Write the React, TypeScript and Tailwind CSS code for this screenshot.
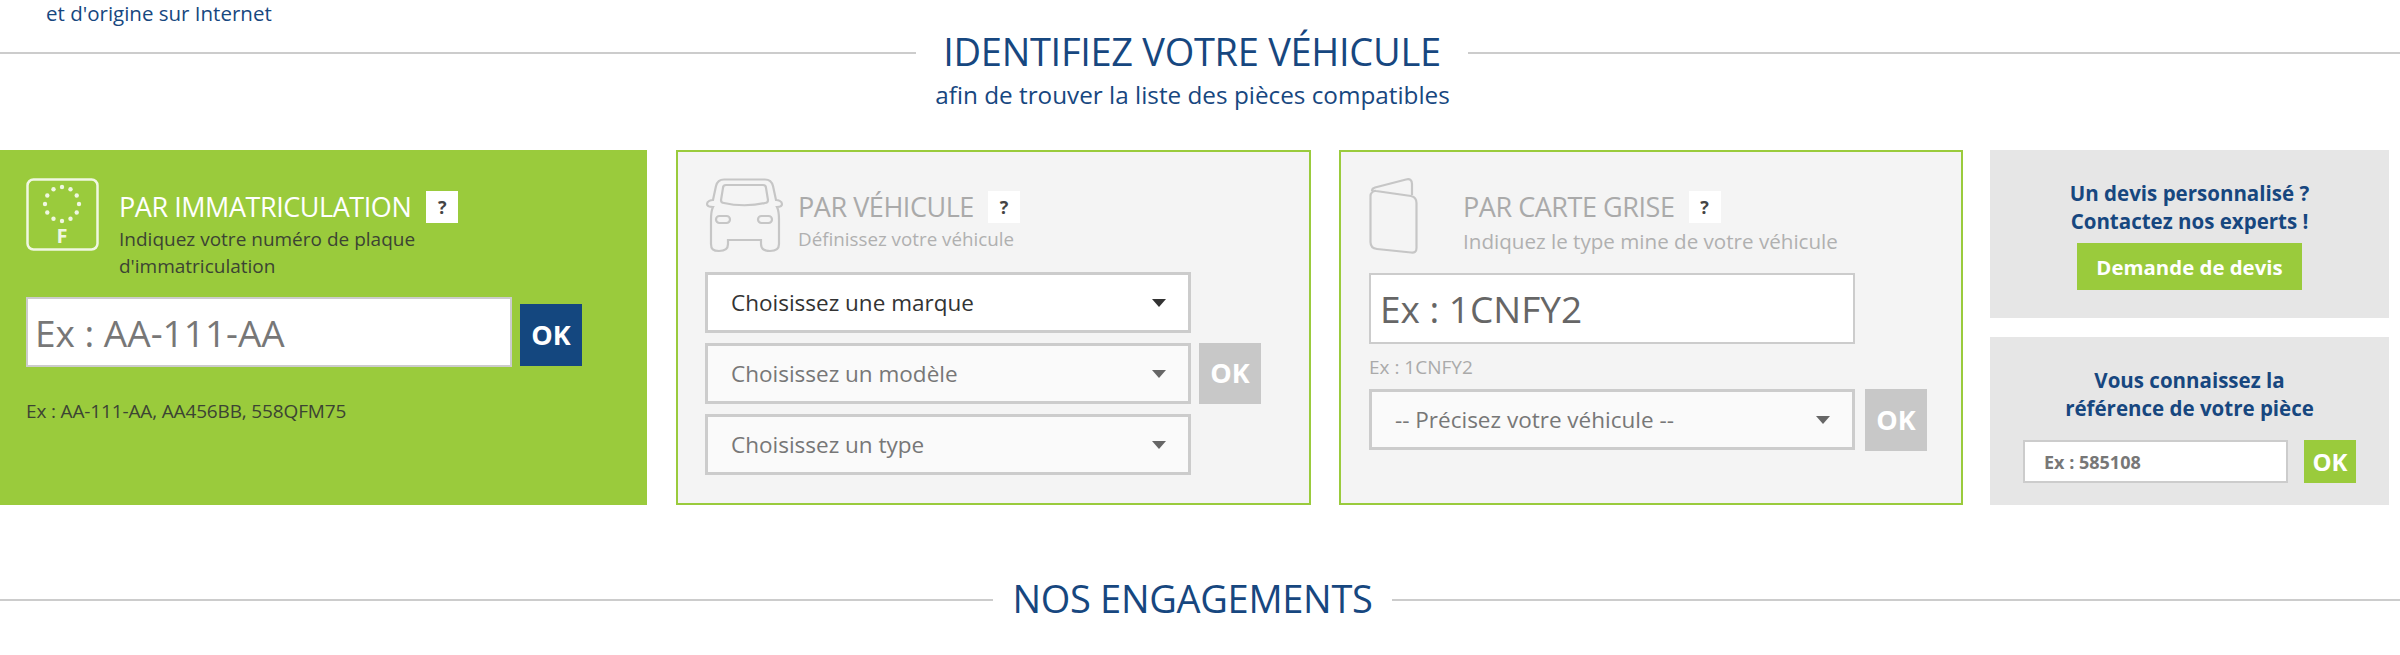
import type { ReactNode } from 'react';

const stars = Array.from({ length: 12 }, (_, i) => {
  const a = (i * Math.PI) / 6;
  return { x: 36 + 17 * Math.sin(a), y: 26 - 17 * Math.cos(a) };
});

const PlateIcon = () => (
  <svg width="73" height="73" viewBox="0 0 73 73" className="shrink-0">
    <rect x="1.5" y="1.5" width="70" height="70" rx="6" fill="none" stroke="#ffffff" strokeOpacity="0.85" strokeWidth="2.5" />
    {stars.map((s, i) => (
      <circle key={i} cx={s.x} cy={s.y} r="2.2" fill="#ffffff" fillOpacity="0.85" />
    ))}
    <text x="36" y="65" textAnchor="middle" fontSize="20" fontWeight="700" fill="#ffffff" fillOpacity="0.85" fontFamily="Open Sans, sans-serif">
      F
    </text>
  </svg>
);

const CarIcon = () => (
  <svg width="79" height="75" viewBox="0 0 79 75" fill="none" stroke="#c6c6c6" strokeWidth="2.2" className="shrink-0">
    <path d="M19 1.5H60C65 1.5 67 4 68 8L71 22C73 22 77 23 77 26C77 29 74 29 72 29C74 33 74 38 74 42V66C74 71 71 73 65 73C59 73 56 71 56 66V62H23V66C23 71 20 73 14 73C8 73 6 71 6 66V42C6 38 6 33 8 29C6 29 2 29 2 26C2 23 6 22 8 22L11 8C12 4 14 1.5 19 1.5Z" />
    <path d="M21 7H58C60 7 61 8 61 10L63 22C63 24 62 25 60 25C48 28 31 28 19 25C17 25 16 24 16 22L18 10C18 8 19 7 21 7Z" />
    <rect x="11" y="38" width="14" height="7" rx="3.5" />
    <rect x="53" y="38" width="14" height="7" rx="3.5" />
  </svg>
);

const CardIcon = () => (
  <svg width="49" height="76" viewBox="0 0 49 76" fill="none" stroke="#c6c6c6" strokeWidth="2.2" className="shrink-0">
    <path d="M7 13L42 18C46 19 47.5 21 47.5 25V70C47.5 74 45.5 75 42 74.5L8 71C3 70.5 1.5 68 1.5 64V18C1.5 15 4 12.5 7 13Z" />
    <path d="M3 13C3 11 4 10 6 9.5L37 1.5C41 0.5 43 2 43 6V17" />
  </svg>
);

const SectionTitle = ({ line, text, children }: { line: string; text: string; children: ReactNode }) => (
  <div className="flex items-center">
    <div className={`h-[2px] bg-[#cccccc] ${line}`} />
    <div className={`pb-[4px] text-center text-[38px] leading-[36px] tracking-[-0.3px] text-[#17477f] ${text}`}>{children}</div>
    <div className="h-[2px] flex-1 bg-[#cccccc]" />
  </div>
);

const Help = () => (
  <span className="flex h-8 w-8 shrink-0 items-center justify-center bg-white text-[18px] font-bold text-[#444444]">?</span>
);

const Ok = ({ className }: { className: string }) => (
  <button className={`flex shrink-0 items-center justify-center font-bold text-white ${className}`}>OK</button>
);

const Select = ({ label, active }: { label: string; active?: boolean }) => (
  <div
    className={`flex h-[61px] w-[486px] items-center justify-between border-[3px] border-[#cccccc] pl-[23px] pr-[22px] text-[22.5px] ${
      active ? 'bg-white text-[#333333]' : 'bg-[#fafafa] text-[#777777]'
    }`}
  >
    <span>{label}</span>
    <span className={`h-0 w-0 border-x-[7px] border-t-[8px] border-x-transparent ${active ? 'border-t-[#333333]' : 'border-t-[#666666]'}`} />
  </div>
);

const Head = ({ title, sub, subClass }: { title: string; sub: string; subClass: string }) => (
  <div className="pt-[13px]">
    <div className="flex h-8 items-center gap-[14px]">
      <span className="text-[27px] tracking-[-0.45px] text-[#aaaaaa]">{title}</span>
      <Help />
    </div>
    <p className={`leading-[27px] text-[#b0b0b0] ${subClass}`}>{sub}</p>
  </div>
);

export default function App() {
  return (
    <div className="h-[655px] overflow-hidden bg-white font-['Open_Sans',sans-serif]">
      <p className="h-[27px] pl-[46px] text-[20.5px] leading-[26px] text-[#17477f]">et d'origine sur Internet</p>

      <div className="mt-[6px]">
        <SectionTitle line="w-[916px]" text="w-[552px]">
          IDENTIFIEZ VOTRE VÉHICULE
        </SectionTitle>
      </div>
      <p className="mt-[4px] h-[36px] pr-[15px] text-center text-[24.3px] leading-[36px] text-[#17477f]">afin de trouver la liste des pièces compatibles</p>

      <div className="mt-[37px] flex h-[355px] pr-[11px]">
        <section className="mr-[29px] w-[647px] bg-[#9acb3c] pl-[26px] pt-[28px]">
          <div className="flex gap-[20px]">
            <PlateIcon />
            <div className="pt-[13px]">
              <div className="flex h-8 items-center gap-[15px]">
                <span className="text-[27px] tracking-[-0.45px] text-white">PAR IMMATRICULATION</span>
                <Help />
              </div>
              <p className="mt-[3px] w-[320px] text-[19px] leading-[27px] text-[#3c4433]">Indiquez votre numéro de plaque d'immatriculation</p>
            </div>
          </div>
          <div className="mt-[17px] flex gap-[8px]">
            <input
              placeholder="Ex : AA-111-AA"
              className="h-[70px] w-[486px] border-2 border-[#cccccc] bg-white px-[7px] text-[37px] placeholder:text-[#777777]"
            />
            <Ok className="mt-[7px] h-[62px] w-[62px] bg-[#14477f] text-[27px]" />
          </div>
          <p className="mt-[32px] text-[19px] leading-[24px] tracking-[-0.15px] text-[#3c4433]">Ex : AA-111-AA, AA456BB, 558QFM75</p>
        </section>

        <section className="mr-[28px] w-[635px] border-2 border-[#9acb3c] bg-[#f4f4f4] pl-[27px] pt-[26px]">
          <div className="flex gap-[14px]">
            <CarIcon />
            <Head title="PAR VÉHICULE" sub="Définissez votre véhicule" subClass="mt-[3px] text-[18.8px]" />
          </div>
          <div className="mt-[19px] flex flex-col gap-[10px]">
            <Select label="Choisissez une marque" active />
            <div className="flex gap-[8px]">
              <Select label="Choisissez un modèle" />
              <Ok className="h-[61px] w-[62px] bg-[#c8c8c8] text-[27px]" />
            </div>
            <Select label="Choisissez un type" />
          </div>
        </section>

        <section className="mr-[27px] w-[624px] border-2 border-[#9acb3c] bg-[#f4f4f4] pl-[28px] pt-[26px]">
          <div className="flex gap-[45px]">
            <CardIcon />
            <Head title="PAR CARTE GRISE" sub="Indiquez le type mine de votre véhicule" subClass="mt-[5px] text-[20.6px]" />
          </div>
          <input
            placeholder="Ex : 1CNFY2"
            className="mt-[18px] block h-[71px] w-[486px] border-2 border-[#cccccc] bg-white px-[9px] text-[37px] placeholder:text-[#666666]"
          />
          <p className="mt-[10px] h-[35px] text-[19px] leading-[26px] text-[#aaaaaa]">Ex : 1CNFY2</p>
          <div className="flex gap-[10px]">
            <Select label="-- Précisez votre véhicule --" />
            <Ok className="h-[62px] w-[62px] bg-[#c8c8c8] text-[27px]" />
          </div>
        </section>

        <aside className="flex w-[399px] flex-col gap-[19px]">
          <div className="flex h-[168px] flex-col items-center bg-[#e6e6e6] pt-[29px] text-[20.5px] font-bold leading-[28px] text-[#17477f]">
            <p>Un devis personnalisé ?</p>
            <p>Contactez nos experts !</p>
            <button className="mt-[8px] h-[47px] w-[225px] bg-[#9acb3c] text-[20.4px] font-bold text-white">Demande de devis</button>
          </div>
          <div className="flex h-[168px] flex-col items-center bg-[#e6e6e6] pt-[29px] text-[20.5px] font-bold leading-[28px] text-[#17477f]">
            <p>Vous connaissez la</p>
            <p>référence de votre pièce</p>
            <div className="mt-[18px] flex gap-[16px]">
              <input
                placeholder="Ex : 585108"
                className="h-[43px] w-[265px] border-2 border-[#cccccc] bg-white pl-[19px] text-[18px] font-bold placeholder:text-[#777777]"
              />
              <Ok className="h-[43px] w-[52px] bg-[#9acb3c] text-[24px]" />
            </div>
          </div>
        </aside>
      </div>

      <div className="mt-[75px]">
        <SectionTitle line="w-[993px]" text="w-[399px]">
          NOS ENGAGEMENTS
        </SectionTitle>
      </div>
    </div>
  );
}
